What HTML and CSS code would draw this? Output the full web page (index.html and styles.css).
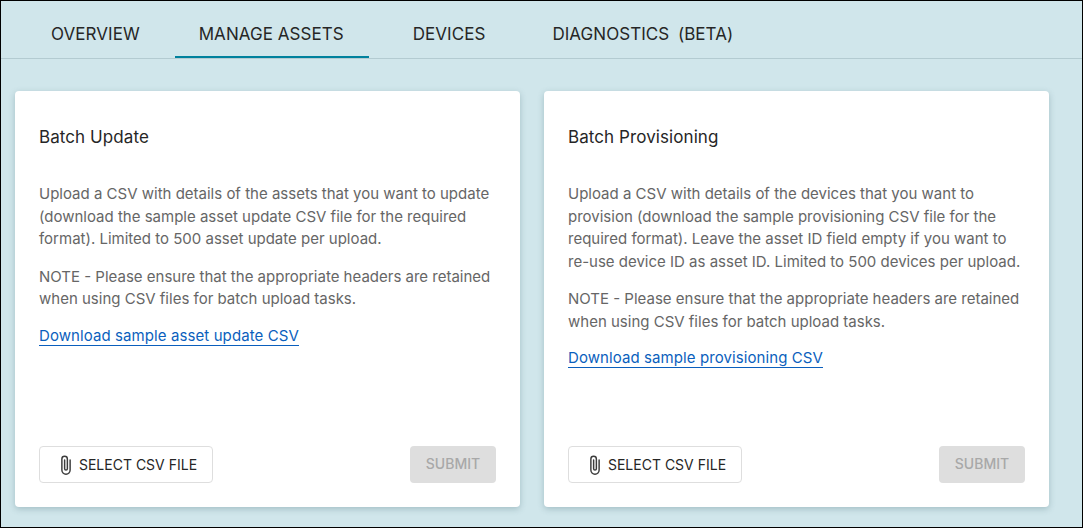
FILE: index.html
```html
<!DOCTYPE html>
<html lang="en">
<head>
<meta charset="utf-8">
<title>Manage Assets</title>
<link rel="stylesheet" href="styles.css">
</head>
<body>
<div class="page">
  <nav class="tabs">
    <a class="tab tab-first">OVERVIEW</a>
    <a class="tab tab-active">MANAGE ASSETS</a>
    <a class="tab">DEVICES</a>
    <a class="tab tab-last">DIAGNOSTICS&nbsp; (BETA)</a>
  </nav>
  <main class="cards">
    <section class="card">
      <h2 class="card-title">Batch Update</h2>
      <p class="text">Upload a CSV with details of the assets that you want to update (download the sample asset update CSV file for the required format). Limited to 500 asset update per upload.</p>
      <p class="text">NOTE - Please ensure that the appropriate headers are retained when using CSV files for batch upload tasks.</p>
      <a class="link">Download sample asset update CSV</a>
      <div class="actions">
        <button class="btn-select">
          <svg class="clip" viewBox="0 0 24 24" width="22" height="22"><path fill="none" stroke="currentColor" stroke-width="1.6" stroke-linecap="round" d="M16.5 6.5v11a4.5 4.5 0 0 1-9 0V5.5a3 3 0 0 1 6 0v10.5a1.5 1.5 0 0 1-3 0V6.5"/></svg>
          SELECT CSV FILE
        </button>
        <button class="btn-submit" disabled>SUBMIT</button>
      </div>
    </section>
    <section class="card">
      <h2 class="card-title">Batch Provisioning</h2>
      <p class="text">Upload a CSV with details of the devices that you want to provision (download the sample provisioning CSV file for the required format). Leave the asset ID field empty if you want to re-use device ID as asset ID. Limited to 500 devices per upload.</p>
      <p class="text">NOTE - Please ensure that the appropriate headers are retained when using CSV files for batch upload tasks.</p>
      <a class="link">Download sample provisioning CSV</a>
      <div class="actions">
        <button class="btn-select">
          <svg class="clip" viewBox="0 0 24 24" width="22" height="22"><path fill="none" stroke="currentColor" stroke-width="1.6" stroke-linecap="round" d="M16.5 6.5v11a4.5 4.5 0 0 1-9 0V5.5a3 3 0 0 1 6 0v10.5a1.5 1.5 0 0 1-3 0V6.5"/></svg>
          SELECT CSV FILE
        </button>
        <button class="btn-submit" disabled>SUBMIT</button>
      </div>
    </section>
  </main>
</div>
</body>
</html>
```
FILE: styles.css
```css
* { box-sizing: border-box; }
html, body { margin: 0; height: 100%; }
body { font-family: Inter, "Liberation Sans", sans-serif; overflow: hidden; }
.page {
  width: 1083px;
  height: 528px;
  border: 1px solid #000;
  background: #d0e6eb;
  display: flex;
  flex-direction: column;
}
.tabs {
  display: flex;
  gap: 20px;
  height: 58px;
  padding-left: 26px;
  border-bottom: 1px solid #b3cbd1;
  flex: none;
}
.tab {
  display: flex;
  align-items: center;
  height: 57px;
  padding: 14px 24px 4px;
  border-bottom: 2px solid transparent;
  font-size: 17px;
  font-weight: 400;
  letter-spacing: 0.05px;
  color: #262626;
}
.tab-first { padding-right: 15px; }
.tab-active { border-bottom-color: #00819d; padding-right: 25px; }
.tab-last { margin-left: -1px; word-spacing: -0.5px; }
.cards {
  display: flex;
  gap: 24px;
  padding: 32px 0 0 14px;
}
.card {
  width: 505px;
  height: 416px;
  background: #fff;
  border-radius: 4px;
  box-shadow: 0 2px 6px rgba(60, 100, 110, 0.3);
  padding: 34px 24px 24px;
  display: flex;
  flex-direction: column;
  align-items: flex-start;
}
.card-title {
  margin: 0 0 34px;
  font-size: 17px;
  line-height: 24px;
  font-weight: 400;
  letter-spacing: 0.08px;
  color: #262626;
}
.text {
  margin: 0 0 15px;
  font-size: 15px;
  line-height: 22.5px;
  color: #666;
}
.link {
  margin-top: 1px;
  font-size: 15px;
  line-height: 18px;
  letter-spacing: 0.09px;
  color: #0b5fbd;
  border-bottom: 1px solid #0b5fbd;
}
.actions {
  margin-top: auto;
  width: 100%;
  display: flex;
  justify-content: space-between;
  align-items: center;
}
.btn-select {
  height: 37px;
  width: 174px;
  display: flex;
  align-items: center;
  justify-content: center;
  gap: 2px;
  background: #fff;
  border: 1px solid #dedede;
  border-radius: 4px;
  font: 400 14px Inter, "Liberation Sans", sans-serif;
  color: #262626;
  padding: 0;
}
.clip { flex: none; color: #3c3c3c; }
.btn-submit {
  height: 37px;
  width: 86px;
  background: #dedede;
  border: 0;
  border-radius: 4px;
  font: 500 14px Inter, "Liberation Sans", sans-serif;
  color: #a8a8a8;
  padding: 0 0 2px;
}
```
